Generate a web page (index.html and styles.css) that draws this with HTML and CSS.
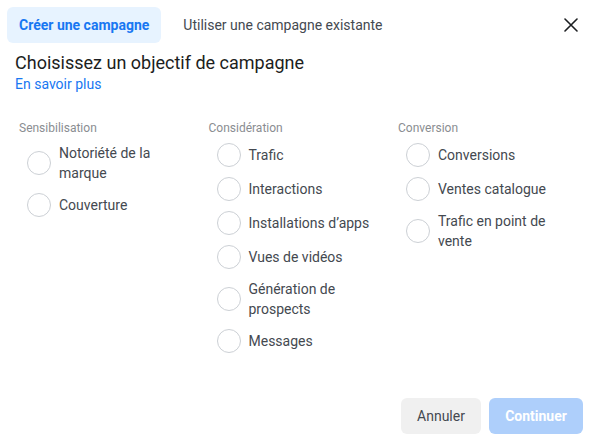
FILE: index.html
```html
<!DOCTYPE html>
<html lang="fr">
<head>
<meta charset="utf-8">
<link rel="stylesheet" href="styles.css">
</head>
<body>
<div class="dialog">
  <div class="tabs">
    <div class="tab tab-active">Créer une campagne</div>
    <div class="tab">Utiliser une campagne existante</div>
    <button class="close" aria-label="Fermer">
      <svg width="14" height="14" viewBox="0 0 14 14"><path d="M1 1L13 13M13 1L1 13" stroke="#1c1e21" stroke-width="1.6" stroke-linecap="round"/></svg>
    </button>
  </div>
  <h1 class="title">Choisissez un objectif de campagne</h1>
  <a class="learn">En savoir plus</a>
  <div class="cols">
    <div class="col">
      <div class="col-head">Sensibilisation</div>
      <div class="opt"><span class="radio"></span><span class="lbl">Notoriété de la marque</span></div>
      <div class="opt"><span class="radio"></span><span class="lbl">Couverture</span></div>
    </div>
    <div class="col">
      <div class="col-head">Considération</div>
      <div class="opt"><span class="radio"></span><span class="lbl">Trafic</span></div>
      <div class="opt"><span class="radio"></span><span class="lbl">Interactions</span></div>
      <div class="opt"><span class="radio"></span><span class="lbl">Installations d’apps</span></div>
      <div class="opt"><span class="radio"></span><span class="lbl">Vues de vidéos</span></div>
      <div class="opt"><span class="radio"></span><span class="lbl">Génération de prospects</span></div>
      <div class="opt"><span class="radio"></span><span class="lbl">Messages</span></div>
    </div>
    <div class="col">
      <div class="col-head">Conversion</div>
      <div class="opt"><span class="radio"></span><span class="lbl">Conversions</span></div>
      <div class="opt"><span class="radio"></span><span class="lbl">Ventes catalogue</span></div>
      <div class="opt"><span class="radio"></span><span class="lbl">Trafic en point de vente</span></div>
    </div>
  </div>
  <div class="footer">
    <button class="btn btn-cancel">Annuler</button>
    <button class="btn btn-continue">Continuer</button>
  </div>
</div>
</body>
</html>
```
FILE: styles.css
```css
html, body {
  margin: 0;
  padding: 0;
  background: #fff;
}
body {
  font-family: Roboto, "Liberation Sans", sans-serif;
  color: #1c1e21;
}
.dialog {
  width: 593px;
  height: 444px;
  display: flex;
  flex-direction: column;
  box-sizing: border-box;
}
.tabs {
  display: flex;
  align-items: center;
  padding: 7px 7px 0 7px;
  gap: 10px;
}
.tab {
  height: 36px;
  line-height: 36px;
  padding: 0 12px;
  font-size: 14px;
  color: #444950;
  border-radius: 6px;
}
.tab-active {
  background: #e7f3ff;
  color: #1877f2;
  font-weight: 700;
}
.close {
  margin-left: auto;
  width: 30px;
  height: 30px;
  margin-right: 0;
  border: 0;
  background: none;
  padding: 0;
  display: flex;
  align-items: center;
  justify-content: center;
}
.title {
  margin: 9px 0 0 15px;
  font-size: 18px;
  font-weight: 400;
  line-height: 22px;
  color: #1c1e21;
}
.learn {
  margin: 0 0 0 15px;
  font-size: 14px;
  line-height: 20px;
  color: #1877f2;
  align-self: flex-start;
}
.cols {
  display: grid;
  grid-template-columns: 189.5px 189.5px 189.5px;
  padding-left: 19px;
  margin-top: 26px;
}
.col {
  display: flex;
  flex-direction: column;
  gap: 10px;
}
.col-head {
  font-size: 12px;
  line-height: 16px;
  color: #8a8d91;
  margin-bottom: -3px;
}
.opt {
  display: flex;
  align-items: center;
  gap: 8px;
  padding-left: 8px;
  padding-right: 20px;
}
.radio {
  flex: none;
  width: 24px;
  height: 24px;
  box-sizing: border-box;
  border: 1px solid #ccd0d5;
  border-radius: 50%;
}
.lbl {
  font-size: 14px;
  line-height: 20px;
  color: #444950;
}
.footer {
  margin-top: auto;
  display: flex;
  justify-content: flex-end;
  gap: 8px;
  padding: 0 10px 10px 0;
}
.btn {
  height: 36px;
  border: 0;
  border-radius: 6px;
  font-family: Roboto, "Liberation Sans", sans-serif;
  font-size: 14px;
  padding: 0 16px;
}
.btn-cancel {
  background: #f0f0f0;
  color: #444950;
  width: 80px;
}
.btn-continue {
  background: #aecffb;
  color: #fff;
  font-weight: 700;
  width: 94px;
}
```
